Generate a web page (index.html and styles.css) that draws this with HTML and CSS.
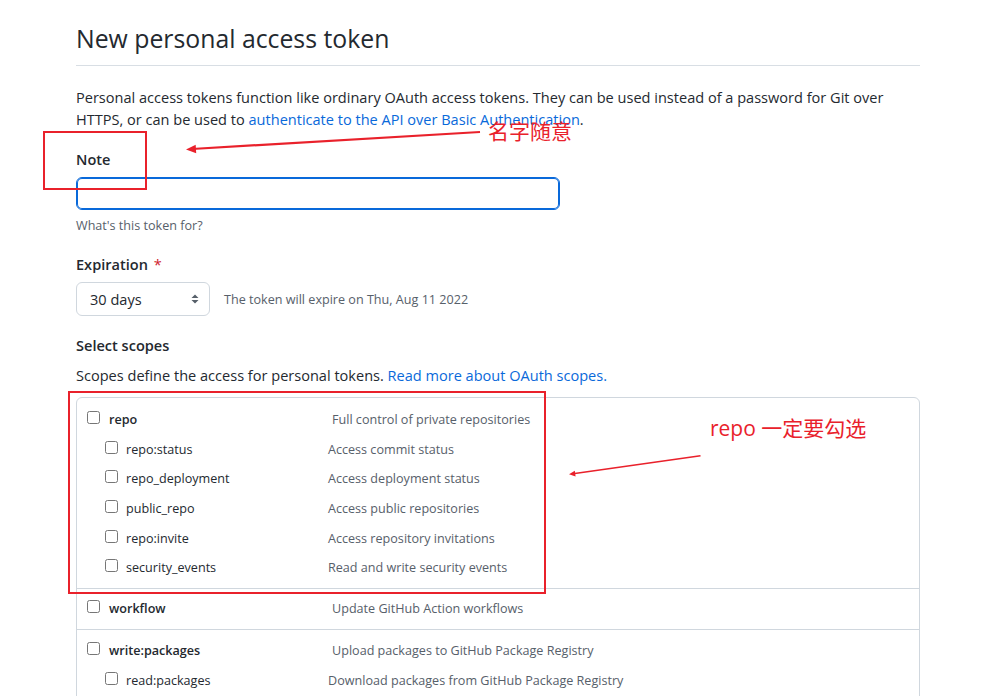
FILE: index.html
```html
<!DOCTYPE html>
<html lang="en">
<head>
<meta charset="utf-8">
<title>New personal access token</title>
<link rel="stylesheet" href="styles.css">
</head>
<body>
<main class="page">
  <div class="subhead">
    <h1 class="subhead-heading">New personal access token</h1>
  </div>
  <p class="lead">Personal access tokens function like ordinary OAuth access tokens. They can be used instead of a password for Git over HTTPS, or can be used to <a href="#">authenticate to the API over Basic Authentication</a>.</p>

  <div class="form-group group-note">
    <label class="form-label" for="note">Note</label>
    <input id="note" class="form-control" type="text">
    <p class="hint">What's this token for?</p>
  </div>

  <div class="form-group group-exp">
    <div class="form-label">Expiration <span class="req">*</span></div>
    <div class="exp-row">
      <div class="select">
        <span>30 days</span>
        <svg class="select-caret" width="8" height="12" viewBox="0 0 8 12"><path d="M4 1.5 L7.5 5 H0.5 Z M4 10.5 L7.5 7 H0.5 Z" fill="#57606a"/></svg>
      </div>
      <span class="exp-note">The token will expire on Thu, Aug 11 2022</span>
    </div>
  </div>

  <div class="form-group group-scopes">
    <div class="form-label">Select scopes</div>
    <p class="scopes-desc">Scopes define the access for personal tokens. <a href="#">Read more about OAuth scopes.</a></p>
    <div class="scopes">
      <div class="scope-group group-repo">
        <div class="scope top"><input type="checkbox"><span class="name">repo</span><span class="desc">Full control of private repositories</span></div>
        <div class="scope sub"><input type="checkbox"><span class="name">repo:status</span><span class="desc">Access commit status</span></div>
        <div class="scope sub"><input type="checkbox"><span class="name">repo_deployment</span><span class="desc">Access deployment status</span></div>
        <div class="scope sub"><input type="checkbox"><span class="name">public_repo</span><span class="desc">Access public repositories</span></div>
        <div class="scope sub"><input type="checkbox"><span class="name">repo:invite</span><span class="desc">Access repository invitations</span></div>
        <div class="scope sub"><input type="checkbox"><span class="name">security_events</span><span class="desc">Read and write security events</span></div>
      </div>
      <div class="scope-group group-workflow">
        <div class="scope top"><input type="checkbox"><span class="name">workflow</span><span class="desc">Update GitHub Action workflows</span></div>
      </div>
      <div class="scope-group">
        <div class="scope top"><input type="checkbox"><span class="name">write:packages</span><span class="desc">Upload packages to GitHub Package Registry</span></div>
        <div class="scope sub"><input type="checkbox"><span class="name">read:packages</span><span class="desc">Download packages from GitHub Package Registry</span></div>
      </div>
      <div class="scope-group">
        <div class="scope top"><input type="checkbox"><span class="name">delete:packages</span><span class="desc">Delete packages from GitHub Package Registry</span></div>
      </div>
    </div>
  </div>
</main>

<div class="annotations" aria-hidden="true">
  <div class="mark mark-note"></div>
  <div class="mark mark-repo"></div>
  <span class="callout callout-note">名字随意</span>
  <span class="callout callout-repo">repo 一定要勾选</span>
  <svg class="arrows" width="1007" height="696" viewBox="0 0 1007 696">
    <line x1="480" y1="132" x2="192" y2="149" stroke="#e9212b" stroke-width="2.2"/>
    <polygon points="186,149.4 196.2,153.2 195.7,144.8" fill="#e9212b"/>
    <line x1="700.5" y1="455.7" x2="573" y2="473.7" stroke="#e9212b" stroke-width="1.6"/>
    <polygon points="569,474.3 575.6,476.6 574.8,470.8" fill="#e9212b"/>
  </svg>
</div>
</body>
</html>
```

FILE: styles.css
```css
* { box-sizing: border-box; }

body {
  margin: 0;
  font-family: "Open Sans", "Noto Sans", "Noto Sans CJK SC", sans-serif;
  font-size: 14.55px;
  color: #24292f;
  background: #ffffff;
  position: relative;
  height: 696px;
  overflow: hidden;
}

a { color: #0969da; text-decoration: none; }

.page {
  width: 844px;
  margin-left: 76px;
  padding-top: 20px;
}

.subhead {
  border-bottom: 1px solid #d8dee4;
  padding-bottom: 8px;
}

.subhead-heading {
  margin: 0;
  font-size: 24.8px;
  font-weight: 400;
  line-height: 37px;
}

.lead {
  margin: 20px 0 0;
  line-height: 22px;
}

.form-label {
  display: block;
  font-weight: 600;
  line-height: 22px;
}

.group-note { margin-top: 18px; }

.form-control {
  display: block;
  margin-top: 7px;
  width: 484px;
  height: 33px;
  border: 1px solid #0969da;
  border-radius: 6px;
  box-shadow: inset 0 0 0 1px #0969da;
  outline: none;
  font: inherit;
  padding: 4px 12px;
  background: #fff;
}

.hint {
  margin: 7px 0 0;
  font-size: 12.6px;
  line-height: 18px;
  color: #57606a;
}

.group-exp { margin-top: 18px; }

.req { color: #cf222e; font-weight: 400; margin-left: 2px; }

.exp-row {
  display: flex;
  align-items: center;
  margin-top: 7px;
  gap: 14px;
}

.select {
  width: 134px;
  height: 34px;
  border: 1px solid #d0d7de;
  border-radius: 6px;
  display: flex;
  align-items: center;
  justify-content: space-between;
  padding: 0 10px 0 13px;
  background: #fff;
}

.select-caret { display: block; }

.exp-note {
  font-size: 12.6px;
  color: #57606a;
}

.group-scopes { margin-top: 18px; }

.scopes-desc {
  margin: 8px 0 0;
  line-height: 22px;
}

.scopes {
  margin-top: 11px;
  border: 1px solid #d0d7de;
  border-radius: 6px;
}

.scope-group {
  padding: 6px 10px 6px;
  border-bottom: 1px solid #d0d7de;
}

.scope-group.group-repo { padding-top: 7px; padding-bottom: 5px; }
.scope-group.group-workflow { padding-top: 5px; padding-bottom: 6px; }

.scope {
  display: flex;
  align-items: center;
  height: 29.6px;
  font-size: 12.6px;
}

.scope input {
  width: 13px;
  height: 13px;
  margin: 0 9px 0 0;
  position: relative;
  top: -2px;
  flex: none;
}

.scope.top .name {
  width: 223px;
  font-weight: 600;
}

.scope.sub { padding-left: 18px; }

.scope.sub input { margin-right: 8px; }

.scope.sub .name { width: 202px; }

.desc { color: #57606a; }

.annotations {
  position: absolute;
  left: 0;
  top: 0;
  width: 1007px;
  height: 696px;
  pointer-events: none;
}

.mark {
  position: absolute;
  border: 2px solid #e9212b;
}

.mark-note { left: 43px; top: 131px; width: 104px; height: 59px; }
.mark-repo { left: 68px; top: 391px; width: 478px; height: 203px; }

.callout {
  position: absolute;
  color: #e9212b;
  font-family: "Noto Sans CJK SC", "Open Sans", sans-serif;
  font-size: 21px;
  line-height: 24px;
  white-space: nowrap;
}

.callout-note { left: 488px; top: 118px; }
.callout-repo { left: 710px; top: 416px; font-family: "Open Sans", "Noto Sans CJK SC", sans-serif; }

.arrows { position: absolute; left: 0; top: 0; }
```
